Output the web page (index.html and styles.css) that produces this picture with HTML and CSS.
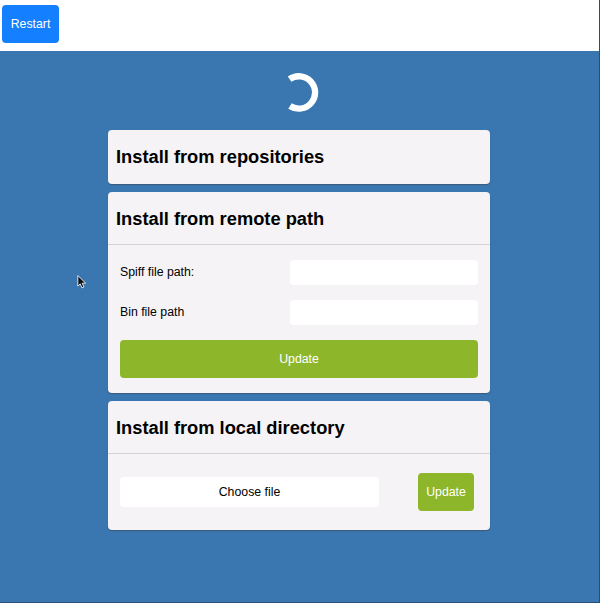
FILE: index.html
```
<!DOCTYPE html>
<html lang="en">
<head>
<meta charset="utf-8">
<title>Install</title>
<link rel="stylesheet" href="styles.css">
</head>
<body>
<header class="topbar"><button class="btn restart">Restart</button></header>
<main class="page">
  <svg class="spinner" width="40" height="40" viewBox="0 0 40 40"><path d="M10.6 6.2A16.2 16.2 0 1 1 11 33" fill="none" stroke="#fff" stroke-width="6.3"/></svg>
  <section class="card repositories">
    <h3 class="title"><span>Install from repositories</span></h3>
  </section>
  <section class="card remote">
    <h3 class="title"><span>Install from remote path</span></h3>
    <form class="fields">
      <label class="field"><span>Spiff file path:</span><input class="input" type="text"></label>
      <label class="field"><span>Bin file path</span><input class="input" type="text"></label>
      <button class="btn update" type="button">Update</button>
    </form>
  </section>
  <section class="card local">
    <h3 class="title"><span>Install from local directory</span></h3>
    <div class="upload">
      <div class="choose">Choose file</div>
      <button class="btn update small" type="button">Update</button>
    </div>
  </section>
</main>
<svg class="cursor" width="12" height="16" viewBox="0 0 12 16"><path d="M1.8 1.5v10.6l2.4-2.2 1.8 4 2-.9-1.8-3.8h3.5z" fill="#111" stroke="#dce4ee" stroke-width="1"/></svg>
</body>
</html>
```
FILE: styles.css
```
* { box-sizing: border-box; }
body {
  margin: 0;
  height: 603px;
  display: flex;
  flex-direction: column;
  overflow: hidden;
  background: #3a76af;
  color: #000;
  font: 12.3px "Liberation Sans", Arial, sans-serif;
  border-right: 1px solid #2c4c70;
  border-bottom: 1px solid #264e78;
}
.topbar {
  height: 51px;
  flex: none;
  padding: 5px 2px;
  background: #fff;
  margin-right: -1px;
  border-right: 1px solid #77787a;
}
.btn {
  display: block;
  height: 38px;
  padding: 0;
  border: 0;
  border-radius: 4px;
  color: #fff;
  font: inherit;
  text-align: center;
}
.restart { width: 57px; background: #1480ff; }
.page {
  display: flex;
  flex-direction: column;
  align-items: center;
  gap: 8px;
  padding: 22px 1px 0 0;
}
.spinner { margin-bottom: 9px; flex: none; }
.card {
  width: 382px;
  flex: none;
  background: #f5f3f6;
  border-radius: 4px;
  box-shadow: 0 1px 1px rgba(60, 60, 60, .45);
}
.repositories { height: 54px; }
.remote { height: 201px; }
.local { height: 129px; }
.title {
  height: 53px;
  margin: 0;
  padding: 2px 8px 0;
  display: flex;
  align-items: center;
  border-bottom: 1px solid #d3d2d5;
  font-size: 18.3px;
  white-space: nowrap;
}
.repositories .title { border: 0; padding-top: 0; }
.fields {
  display: flex;
  flex-direction: column;
  gap: 15px;
  padding: 15px 12px;
}
.field {
  height: 25px;
  display: flex;
  align-items: center;
  justify-content: space-between;
}
.field span { padding-bottom: 1px; }
.input {
  width: 188px;
  height: 25px;
  padding: 0 6px;
  border: 0;
  border-radius: 4px;
  background: #fff;
  font: inherit;
}
.update { background: #8db62a; }
.upload {
  height: 76px;
  display: flex;
  align-items: center;
  justify-content: space-between;
  padding: 0 16px 0 12px;
}
.choose {
  width: 259px;
  height: 30px;
  border-radius: 4px;
  background: #fff;
  line-height: 30px;
  text-align: center;
}
.small { width: 56px; }
.cursor {
  position: absolute;
  left: 76px;
  top: 274px;
}
```
